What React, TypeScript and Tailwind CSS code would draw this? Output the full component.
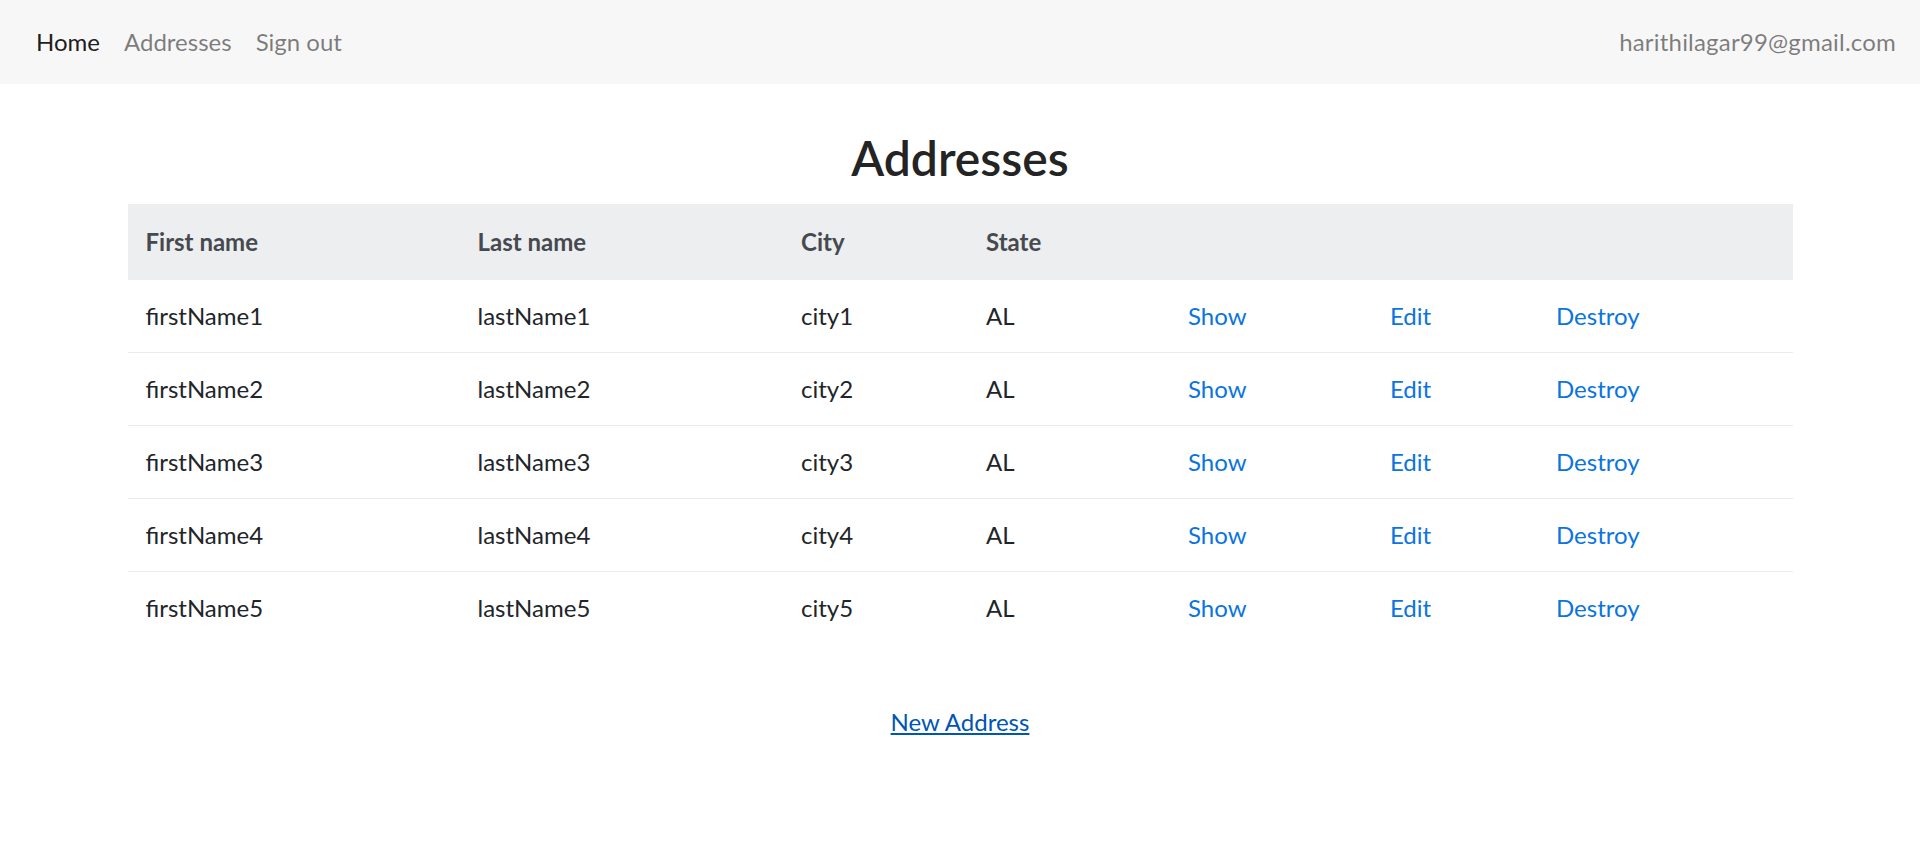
import React from 'react';

const rows = [1, 2, 3, 4, 5].map(i => ({
  first: `firstName${i}`,
  last: `lastName${i}`,
  city: `city${i}`,
  state: 'AL',
}));

const cell = 'px-[18px] py-[18px] leading-[36px] text-left align-top';

export default function App() {
  return (
    <div className="min-h-screen bg-white text-[24px] text-[#212529] font-['Segoe_UI','Lato',sans-serif]">
      <nav className="h-[84px] bg-[#f7f7f7] flex items-center justify-between px-[24px]">
        <ul className="flex">
          <li><a href="#" className="block px-[12px] leading-[36px] text-black/90">Home</a></li>
          <li><a href="#" className="block px-[12px] leading-[36px] text-black/50">Addresses</a></li>
          <li><a href="#" className="block px-[12px] leading-[36px] text-black/50">Sign out</a></li>
        </ul>
        <span className="leading-[36px] text-black/50 tracking-[0.2px]">harithilagar99@gmail.com</span>
      </nav>

      <div className="w-[1710px] mx-auto px-[22.5px]">
        <h1 className="text-center text-[48px] font-semibold leading-[57.6px] mt-[45px] mb-[17px] text-[#242424]">Addresses</h1>

        <table className="w-full border-collapse table-fixed">
          <thead>
            <tr className="bg-[#eceef0] text-[#464a4f]">
              <th className={`${cell} w-[332px] font-bold py-[20px]`}>First name</th>
              <th className={`${cell} w-[323.5px] font-bold py-[20px]`}>Last name</th>
              <th className={`${cell} w-[185px] font-bold py-[20px]`}>City</th>
              <th className={`${cell} w-[202px] font-bold py-[20px]`}>State</th>
              <th className={`${cell} w-[202px]`}></th>
              <th className={`${cell} w-[166px]`}></th>
              <th className={`${cell} w-[255px]`}></th>
            </tr>
          </thead>
          <tbody>
            {rows.map((r, i) => (
              <tr key={r.first} className={i > 0 ? 'border-t border-[#e9ecef]' : ''}>
                <td className={cell}>{r.first}</td>
                <td className={cell}>{r.last}</td>
                <td className={cell}>{r.city}</td>
                <td className={cell}>{r.state}</td>
                <td className={cell}><a href="#" className="text-[#0a74e0]">Show</a></td>
                <td className={cell}><a href="#" className="text-[#0a74e0]">Edit</a></td>
                <td className={cell}><a href="#" className="text-[#0a74e0]">Destroy</a></td>
              </tr>
            ))}
          </tbody>
        </table>

        <div className="text-center mt-[60px]">
          <a href="#" className="leading-[36px] text-[#0056b3] underline">New Address</a>
        </div>
      </div>
    </div>
  );
}
